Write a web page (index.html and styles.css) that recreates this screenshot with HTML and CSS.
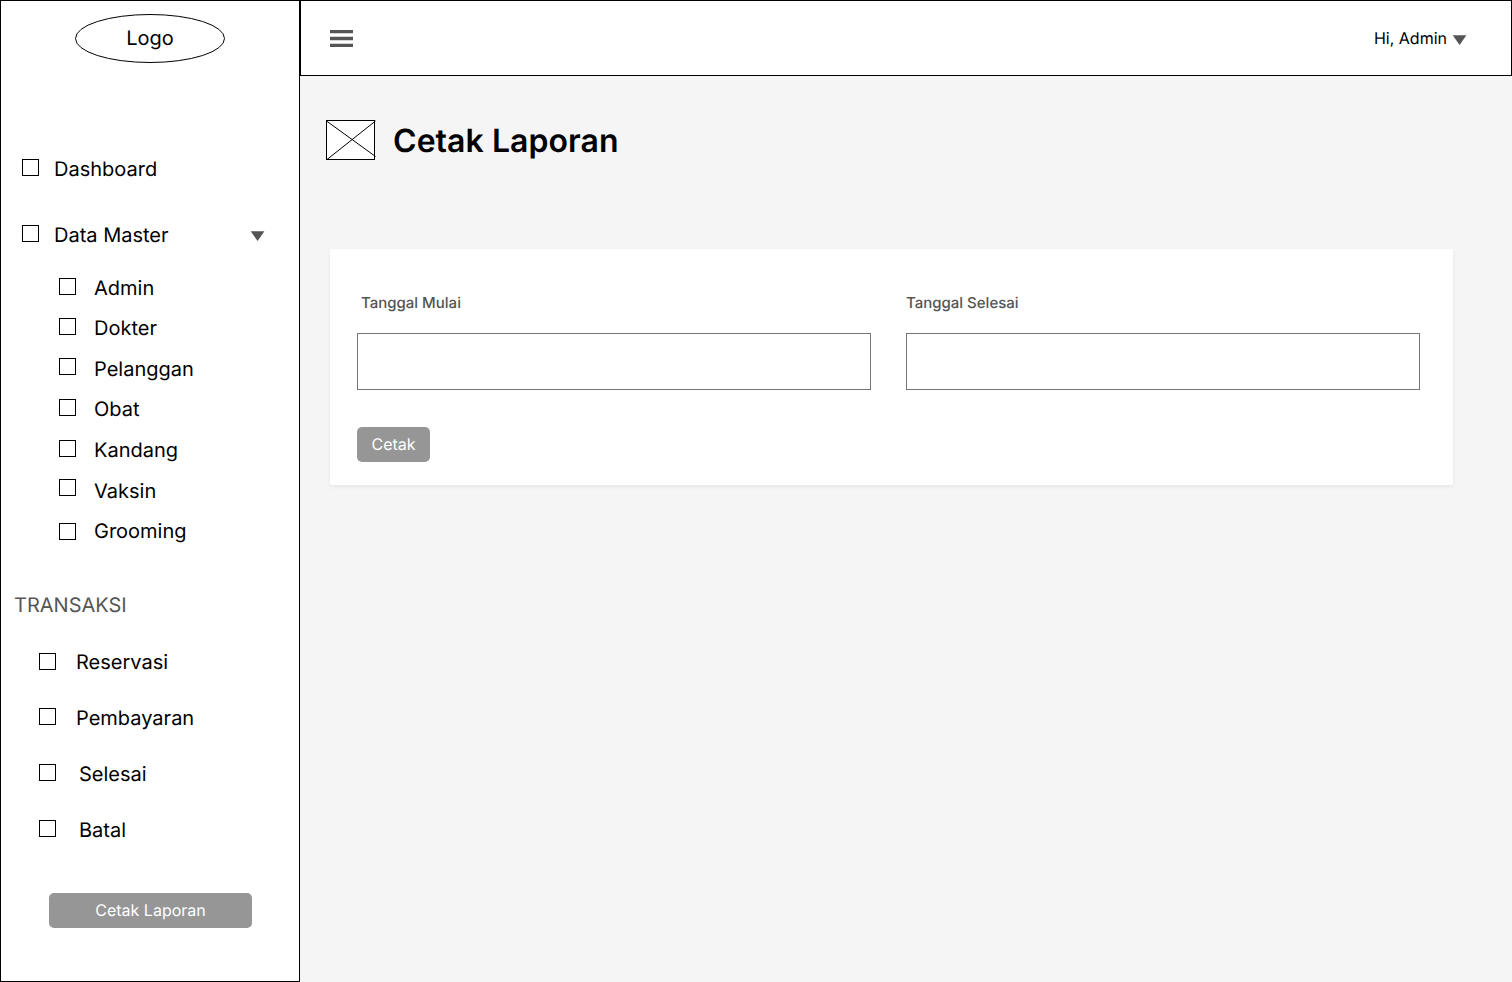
FILE: index.html
```html
<!DOCTYPE html>
<html lang="id">
<head>
<meta charset="utf-8">
<title>Cetak Laporan</title>
<link rel="stylesheet" href="styles.css">
</head>
<body>
<div class="app">
  <aside class="sidebar">
    <div class="logo"><svg class="logo-shape" width="150" height="49" viewBox="0 0 150 49"><ellipse cx="75" cy="24.5" rx="74.5" ry="24" fill="#fff" stroke="#000"/></svg><span class="logo-text">Logo</span></div>
    <nav class="nav">
      <ul class="menu main">
        <li class="item"><i class="box"></i><span>Dashboard</span></li>
        <li class="item"><i class="box"></i><span>Data Master</span><svg class="caret" width="14" height="10" viewBox="0 0 14 10"><path d="M-.3 .3H13.4L6.6 10Z" fill="#555"/></svg></li>
      </ul>
      <ul class="menu sub">
        <li class="item"><i class="box"></i><span>Admin</span></li>
        <li class="item"><i class="box"></i><span>Dokter</span></li>
        <li class="item"><i class="box up"></i><span>Pelanggan</span></li>
        <li class="item"><i class="box"></i><span>Obat</span></li>
        <li class="item"><i class="box"></i><span>Kandang</span></li>
        <li class="item"><i class="box top"></i><span>Vaksin</span></li>
        <li class="item"><i class="box low"></i><span>Grooming</span></li>
      </ul>
      <h2 class="section">TRANSAKSI</h2>
      <ul class="menu trans">
        <li class="item"><i class="box down"></i><span>Reservasi</span></li>
        <li class="item"><i class="box"></i><span>Pembayaran</span></li>
        <li class="item wide"><i class="box"></i><span>Selesai</span></li>
        <li class="item wide"><i class="box"></i><span>Batal</span></li>
      </ul>
    </nav>
    <button class="btn report">Cetak Laporan</button>
  </aside>
  <div class="content">
    <header class="topbar">
      <svg width="23" height="18" viewBox="0 0 23 18"><path d="M0 0H23V3.3H0ZM0 6.7H23V10.3H0ZM0 13.7H23V17H0Z" fill="#555"/></svg>
      <div class="user"><span>Hi, Admin</span><svg class="user-caret" width="14" height="10" viewBox="0 0 14 10"><path d="M-.3 .3H13.4L6.6 10Z" fill="#555"/></svg></div>
    </header>
    <main class="page">
      <div class="title-row">
        <svg width="50" height="40" viewBox="0 0 50 40"><rect x=".5" y=".5" width="48" height="39" fill="#fff" stroke="#000"/><path d="M.5 1L49.5 36.5M1 39.5L49.5 1" fill="none" stroke="#000"/></svg>
        <h1 class="title">Cetak Laporan</h1>
      </div>
      <form class="card">
        <div class="fields">
          <div class="field"><label class="label first" for="start">Tanggal Mulai</label><input class="input" id="start"></div>
          <div class="field"><label class="label" for="end">Tanggal Selesai</label><input class="input" id="end"></div>
        </div>
        <button class="btn print" type="button">Cetak</button>
      </form>
    </main>
  </div>
</div>
</body>
</html>
```
FILE: styles.css
```css
* { box-sizing: border-box; }
body { margin: 0; font-family: Inter, sans-serif; color: #000; background: #f5f5f5; text-rendering: geometricPrecision; }
svg { display: block; flex: none; overflow: visible; }
.app { display: flex; height: 982px; overflow: hidden; }

.sidebar { flex: none; width: 300px; background: #fff; border: 1px solid #000; }
.logo { display: grid; width: 150px; height: 49px; margin: 13px 0 0 74px; place-items: center; }
.logo-shape, .logo-text { grid-area: 1 / 1; }
.logo-text { padding-bottom: 2px; font-size: 20px; line-height: 24px; }
.menu { margin: 0; padding: 0; list-style: none; display: flex; flex-direction: column; }
.item { display: flex; align-items: flex-start; height: 24px; font-size: 20px; line-height: 24px; }
.box { flex: none; width: 17px; height: 17px; margin: 2px 15px 0 0; border: 1px solid #000; }
.box.up { margin-top: 1px; }
.box.top { margin-top: 0; }
.box.down { margin-top: 3px; }
.box.low { margin-top: 4px; }
.main { gap: 42px; padding: 94px 34px 0 21px; }
.caret { margin: 8px 0 0 auto; }
.sub { padding: 29px 0 0 58px; }
.sub .item + .item { margin-top: 16px; }
.sub .item:nth-child(3), .sub .item:nth-child(5), .sub .item:nth-child(6) { margin-top: 17px; }
.sub .box { margin-right: 18px; }
.section { margin: 50px 0 0 13px; font-size: 20px; line-height: 24px; font-weight: 400; color: #555; }
.trans { gap: 32px; padding: 33px 0 0 38px; }
.trans .box { margin-right: 20px; }
.trans .wide .box { margin-right: 23px; }

.btn { display: block; height: 35px; padding: 0; border: 0; border-radius: 5px; background: #969696; color: #fff; font: 400 16px/35px Inter, sans-serif; text-align: center; text-rendering: inherit; }
.report { width: 203px; margin: 51px 0 0 48px; }

.content { flex: 1; }
.topbar { display: flex; justify-content: space-between; height: 76px; padding: 29px 44px 0 29px; background: #fff; border: 1px solid #000; }
.user { display: flex; gap: 6px; height: 19px; font-size: 16px; line-height: 17px; }
.user-caret { margin-top: 5px; }
.page { padding: 44px 59px 0 26px; }
.title-row { display: flex; align-items: flex-start; gap: 17px; height: 40px; }
.title { margin: 1px 0 0; font-size: 32px; line-height: 40px; font-weight: 600; letter-spacing: .05px; }
.card { height: 236px; margin: 89px 0 0 4px; padding: 45px 33px 0 27px; background: #fff; border-radius: 2px; box-shadow: 0 2px 4px rgba(0, 0, 0, .06); }
.fields { display: grid; grid-template-columns: 1fr 1fr; gap: 35px; }
.label { display: block; font-size: 15px; line-height: 18px; font-weight: 500; color: #555; }
.label.first { padding-left: 4px; }
.input { display: block; width: 100%; height: 57px; margin-top: 21px; padding: 0 12px; border: 1px solid #757575; background: #fff; font: 16px Inter, sans-serif; }
.print { width: 73px; margin-top: 37px; }
```
